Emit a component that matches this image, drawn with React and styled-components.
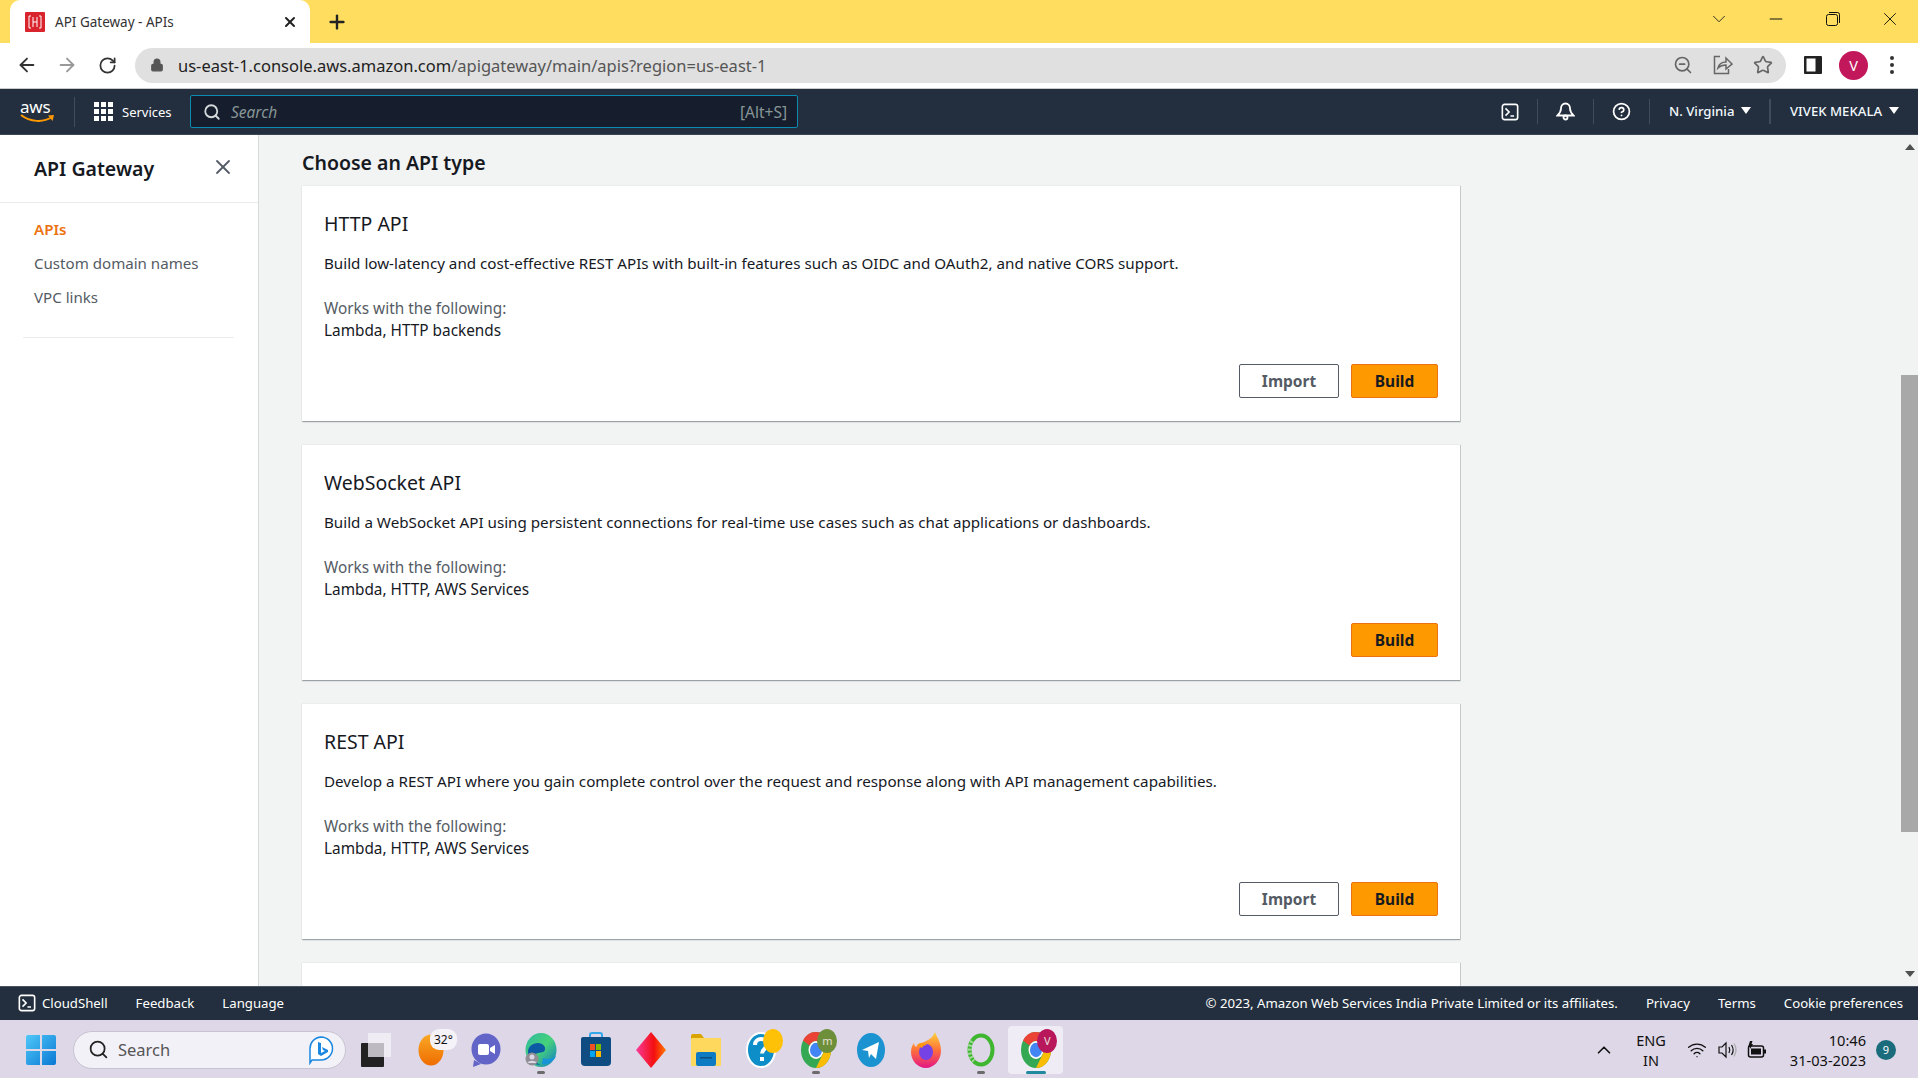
import React from "react";
import styled, { createGlobalStyle } from "styled-components";
import { ArrowLeft, ArrowRight, RotateCw, Lock, ZoomOut, Star, X, Plus, ChevronDown, ChevronUp, Minus, Search, CircleHelp, Wifi } from "lucide-react";

const GlobalStyle = createGlobalStyle`
  html, body { margin: 0; padding: 0; height: 100%; overflow: hidden; }
  body { font-family: "Noto Sans", "Liberation Sans", sans-serif; }
  #root { height: 1078px; width: 1918px; }
  * { box-sizing: border-box; }
`;

const apiTypes = [
  {
    title: "HTTP API",
    text: "Build low-latency and cost-effective REST APIs with built-in features such as OIDC and OAuth2, and native CORS support.",
    works: "Lambda, HTTP backends",
    canImport: true,
  },
  {
    title: "WebSocket API",
    text: "Build a WebSocket API using persistent connections for real-time use cases such as chat applications or dashboards.",
    works: "Lambda, HTTP, AWS Services",
    canImport: false,
  },
  {
    title: "REST API",
    text: "Develop a REST API where you gain complete control over the request and response along with API management capabilities.",
    works: "Lambda, HTTP, AWS Services",
    canImport: true,
  },
];

function ShellIcon({ size = 20 }) {
  return (
    <svg width={size} height={size} viewBox="0 0 20 20" fill="none" stroke="#fff" strokeWidth="1.8">
      <rect x="1.5" y="1.5" width="17" height="17" rx="2.5" />
      <path d="M5 6l4 4-4 4M10.5 14.5h4" />
    </svg>
  );
}

function BellIcon() {
  return (
    <svg width="19" height="19" viewBox="0 0 19 19" fill="none" stroke="#fff" strokeWidth="1.8">
      <path d="M9.500 1.500c-3 0-4.500 2.500-4.500 5 0 3-1 4.500-3.500 7h16c-2.500-2.500-3.500-4-3.500-7 0-2.500-1.500-5-4.500-5z" />
      <circle cx="9.500" cy="15.500" r="2" />
    </svg>
  );
}

function WindowsLogo() {
  return (
    <svg width="30" height="30" viewBox="0 0 30 30">
      <defs>
        <linearGradient id="win" x1="0" y1="0" x2="1" y2="1">
          <stop offset="0" stopColor="#4fc8f8" />
          <stop offset="1" stopColor="#0a78d4" />
        </linearGradient>
      </defs>
      <path fill="url(#win)" d="M0 2a2 2 0 012-2h12v14H0zM16 0h12a2 2 0 012 2v12H16zM0 16h14v14H2a2 2 0 01-2-2zM16 16h14v12a2 2 0 01-2 2H16z" />
    </svg>
  );
}

function DesktopIcon() {
  return (
    <svg width="30" height="36" viewBox="0 0 30 36">
      <rect x="7" y="1" width="23" height="24" fill="#efedf3" />
      <rect x="0" y="11" width="23" height="24" rx="1" fill="#222" />
      <rect x="7" y="11" width="16" height="14" fill="#bdbac2" />
    </svg>
  );
}

function WeatherIcon() {
  return (
    <svg width="26" height="32" viewBox="0 0 26 32">
      <defs>
        <linearGradient id="sun" x1="0" y1="0" x2="0" y2="1">
          <stop offset="0" stopColor="#f9a825" />
          <stop offset="1" stopColor="#ef6c00" />
        </linearGradient>
      </defs>
      <ellipse cx="13" cy="16" rx="12.5" ry="15.5" fill="url(#sun)" />
    </svg>
  );
}

function MeetIcon() {
  return (
    <svg width="30" height="34" viewBox="0 0 30 34">
      <ellipse cx="15" cy="16" rx="14.5" ry="15.5" fill="#6264c8" />
      <path d="M3 27l-1 7 8-3z" fill="#6264c8" />
      <rect x="7" y="11" width="11" height="11" rx="2" fill="#fff" />
      <path d="M19 15l5-3v9l-5-3z" fill="#fff" />
    </svg>
  );
}

function EdgeIcon() {
  return (
    <svg width="32" height="36" viewBox="0 0 32 36">
      <defs>
        <linearGradient id="edge" x1="0" y1="0" x2="1" y2="1">
          <stop offset="0" stopColor="#2fb7a0" />
          <stop offset="0.5" stopColor="#46d27a" />
          <stop offset="1" stopColor="#1077c9" />
        </linearGradient>
      </defs>
      <ellipse cx="16" cy="18" rx="15.5" ry="17" fill="url(#edge)" />
      <path d="M3 20c0-7 8-11 14-8 4 2 4 7 1 8-3 1-7 0-8 4-1 3 1 8 6 9C8 33 3 27 3 20z" fill="#0c59a4" />
      <path d="M17 32c6 1 12-3 14-8-4 3-9 4-13 2z" fill="#1793d8" />
      <circle cx="7" cy="27" r="6.5" fill="#8f8e94" />
      <circle cx="7" cy="25" r="2.5" fill="#dcd6e6" />
      <path d="M2.5 31c1-3 8-3 9 0z" fill="#dcd6e6" />
    </svg>
  );
}

function StoreIcon() {
  return (
    <svg width="30" height="36" viewBox="0 0 30 36">
      <path d="M9 6V3a2 2 0 012-2h8a2 2 0 012 2v3" fill="none" stroke="#35a7e8" strokeWidth="2" />
      <path d="M0 7a2 2 0 012-2h26a2 2 0 012 2v23a4 4 0 01-4 4H4a4 4 0 01-4-4z" fill="#0f4c81" />
      <rect x="9" y="12" width="5" height="6" fill="#f25022" />
      <rect x="15" y="12" width="5" height="6" fill="#7fba00" />
      <rect x="9" y="19" width="5" height="6" fill="#00a4ef" />
      <rect x="15" y="19" width="5" height="6" fill="#ffb900" />
    </svg>
  );
}

function DiamondIcon() {
  return (
    <svg width="30" height="36" viewBox="0 0 30 36">
      <defs>
        <linearGradient id="dia" x1="0" y1="0" x2="1" y2="0">
          <stop offset="0" stopColor="#f83a9a" />
          <stop offset="0.6" stopColor="#f40f0f" />
          <stop offset="1" stopColor="#ff7a00" />
        </linearGradient>
      </defs>
      <path d="M15 0l15 18-15 18L0 18z" fill="url(#dia)" />
    </svg>
  );
}

function FolderIcon() {
  return (
    <svg width="30" height="32" viewBox="0 0 30 32">
      <path d="M0 2a2 2 0 012-2h8l3 4h15a2 2 0 012 2v4H0z" fill="#d9a400" />
      <rect x="0" y="4" width="30" height="28" rx="1" fill="#fdd85d" />
      <rect x="5" y="18" width="20" height="14" rx="2" fill="#0d7bc4" />
      <rect x="9" y="23" width="12" height="1.5" fill="#0a4f80" />
    </svg>
  );
}

function HelpAppIcon() {
  return (
    <svg width="30" height="36" viewBox="0 0 30 36">
      <ellipse cx="15" cy="18" rx="14" ry="17" fill="#0d8ec9" stroke="#fff" strokeWidth="2" />
      <path d="M9 13c0-4 3-6 6-6s6 2 6 5.500c0 4-5 4.500-5 9M16 25v4" fill="none" stroke="#fff" strokeWidth="4" />
    </svg>
  );
}

function ChromeIcon() {
  return (
    <svg width="30" height="36" viewBox="0 0 30 30" preserveAspectRatio="none">
      <circle cx="15" cy="15" r="15" fill="#34a853" />
      <path d="M15 0a15 15 0 0113 7.5H15a7.5 7.5 0 00-6.5 3.75L2 7A15 15 0 0115 0z" fill="#ea4335" />
      <path d="M28 7.5A15 15 0 0115 30l6.5-11.25A7.5 7.5 0 0022 11z" fill="#fbbc04" />
      <circle cx="15" cy="15" r="7.5" fill="#fff" />
      <circle cx="15" cy="15" r="6" fill="#4285f4" />
    </svg>
  );
}

function TelegramIcon() {
  return (
    <svg width="28" height="34" viewBox="0 0 28 34">
      <ellipse cx="14" cy="17" rx="14" ry="17" fill="#1c93d1" />
      <path d="M5 17l17-8-3 17-5-5-2 4-1-7z" fill="#fff" />
    </svg>
  );
}

function FirefoxIcon() {
  return (
    <svg width="30" height="36" viewBox="0 0 30 36">
      <defs>
        <linearGradient id="fox" x1="0" y1="0" x2="0" y2="1">
          <stop offset="0" stopColor="#ffd43b" />
          <stop offset="0.5" stopColor="#ff7139" />
          <stop offset="1" stopColor="#e31587" />
        </linearGradient>
      </defs>
      <path d="M24 0c1 4 6 9 6 19 0 9-7 17-15 17S0 29 0 20c0-4 1-6 3-9 0 2 1 3 2 4 2-4 7-4 10-6 4-2 7-4 9-9z" fill="url(#fox)" />
      <ellipse cx="15" cy="20" rx="7" ry="8" fill="#7542e5" />
      <path d="M6 13c3-3 8-2 10 0-3 0-4 1-5 3z" fill="#ff980e" />
    </svg>
  );
}

function RingIcon() {
  return (
    <svg width="28" height="34" viewBox="0 0 28 34">
      <ellipse cx="14" cy="17" rx="11.5" ry="14.5" fill="none" stroke="#3fb62f" strokeWidth="4" />
      <path d="M5 8C1 14 2 24 7 28" fill="none" stroke="#a5d89c" strokeWidth="4" strokeDasharray="2 2" />
    </svg>
  );
}

function SidePanelIcon() {
  return (
    <svg width="18" height="18" viewBox="0 0 18 18">
      <rect width="18" height="18" rx="1" fill="#222" />
      <rect x="2.5" y="2.5" width="9" height="13" fill="#fff" />
    </svg>
  );
}

function ShareIcon() {
  return (
    <svg width="20" height="20" viewBox="0 0 20 20" fill="none" stroke="#666" strokeWidth="1.5">
      <path d="M7 1.5H1.5v17h14V14" />
      <path d="M5 13c1-4 4-6 8-6V3l6 6-6 5v-4c-3 0-6 1-8 3z" />
    </svg>
  );
}

function BatteryIcon() {
  return (
    <svg width="20" height="20" viewBox="0 0 20 20">
      <path d="M3 1L1 7h2v2l3-5H4.5L5.5 1z" fill="#111" />
      <rect x="1.5" y="6" width="15" height="11" rx="2" fill="none" stroke="#111" strokeWidth="1.5" />
      <rect x="4" y="8.5" width="10" height="6" fill="#111" />
      <rect x="17" y="9.5" width="2" height="4" fill="#111" />
    </svg>
  );
}

function SpeakerIcon() {
  return (
    <svg width="20" height="20" viewBox="0 0 20 20" fill="none" stroke="#111" strokeWidth="1.2">
      <path d="M2 7h3l4-4v14l-4-4H2z" />
      <path d="M12 7c1 2 1 4 0 6M14.5 5c2 3 2 7 0 10" />
      <path d="M17 3.5c2.500 4 2.500 9 0 13" stroke="#aaa" />
    </svg>
  );
}

function BingIcon() {
  return (
    <svg width="26" height="30" viewBox="0 0 26 30">
      <path d="M13 2a11.500 11.500 0 110 23H4l-2 3V13.500A11.500 11.500 0 0113 2z" fill="#fff" stroke="#1a87e0" strokeWidth="1.5" />
      <path d="M10 7l3 1v10l4-2-2-1-1-3 6 3v2l-7 4-3-2z" fill="#1a87e0" />
    </svg>
  );
}

function RestoreIcon() {
  return (
    <svg width="14" height="14" viewBox="0 0 14 14" fill="none" stroke="#111" strokeWidth="1">
      <rect x="0.500" y="2.500" width="11" height="11" rx="2" />
      <path d="M3 .5h8.500a2 2 0 012 2V11" />
    </svg>
  );
}

export default function App() {
  return (
    <Page>
      <GlobalStyle />
      <TabStrip>
        <Tab>
          <Favicon>
            <svg width="14" height="14" viewBox="0 0 14 14" fill="none" stroke="#fff" strokeWidth="1">
              <path d="M3 1H1v12h2M11 1h2v12h-2M5 2v10M9 2v10M5 7h4" />
            </svg>
          </Favicon>
          <TabTitle>API Gateway - APIs</TabTitle>
          <X size={16} strokeWidth={3} color="#222" />
        </Tab>
        <NewTab>
          <Plus size={22} strokeWidth={2.6} color="#222" />
        </NewTab>
        <WindowControls>
          <ChevronDown size={22} strokeWidth={1} color="#222" />
          <Minus size={20} strokeWidth={1.2} color="#111" />
          <RestoreIcon />
          <X size={22} strokeWidth={1} color="#111" />
        </WindowControls>
      </TabStrip>

      <Toolbar>
        <ToolIcon><ArrowLeft size={22} color="#333" /></ToolIcon>
        <ToolIcon><ArrowRight size={22} color="#999" /></ToolIcon>
        <ToolIcon><RotateCw size={19} color="#333" strokeWidth={2.2} /></ToolIcon>
        <Omnibox>
          <Lock size={14} color="#555" fill="#555" />
          <Url>us-east-1.console.aws.amazon.com<UrlRest>/apigateway/main/apis?region=us-east-1</UrlRest></Url>
          <OmniIcons>
            <ZoomOut size={20} color="#666" />
            <ShareIcon />
            <Star size={20} color="#666" />
          </OmniIcons>
        </Omnibox>
        <ProfileGroup>
          <SidePanelIcon />
          <Avatar>V</Avatar>
          <MenuDots><i /><i /><i /></MenuDots>
        </ProfileGroup>
      </Toolbar>

      <NavBar>
        <LogoSlot>
          <LogoWord>aws</LogoWord>
          <svg width="36" height="10" viewBox="0 0 36 10">
            <path d="M1 1c9 7 22 8 31 2" fill="none" stroke="#f90" strokeWidth="2" />
            <path d="M28 1.500l6-.5-1.500 6z" fill="#f90" />
          </svg>
        </LogoSlot>
        <ServicesButton>
          <GridIcon>{Array.from({ length: 9 }).map((_, i) => <i key={i} />)}</GridIcon>
          Services
        </ServicesButton>
        <SearchBox>
          <Search size={18} color="#d5dbdb" strokeWidth={2.4} />
          <SearchText>Search</SearchText>
          <SearchHint>[Alt+S]</SearchHint>
        </SearchBox>
        <NavRight>
          <NavIcon><ShellIcon size={18} /></NavIcon>
          <NavIcon><BellIcon /></NavIcon>
          <NavIcon><CircleHelp size={19} color="#fff" strokeWidth={2.2} /></NavIcon>
          <NavMenu $width={121}>N. Virginia<Caret /></NavMenu>
          <NavMenu $width={147} $last>VIVEK MEKALA<Caret /></NavMenu>
        </NavRight>
      </NavBar>

      <Body>
        <Sidebar>
          <SideHeader>
            <SideTitle>API Gateway</SideTitle>
            <CloseSlot><X size={24} strokeWidth={1.8} color="#545b64" /></CloseSlot>
          </SideHeader>
          <SideList>
            <SideLink $active>APIs</SideLink>
            <SideLink>Custom domain names</SideLink>
            <SideLink>VPC links</SideLink>
          </SideList>
          <SideRule />
        </Sidebar>
        <Main>
          <Heading>Choose an API type</Heading>
          {apiTypes.map((api) => (
            <Card key={api.title}>
              <CardTitle>{api.title}</CardTitle>
              <CardText>{api.text}</CardText>
              <WorksLabel>Works with the following:</WorksLabel>
              <WorksValue>{api.works}</WorksValue>
              <CardActions>
                {api.canImport && <Button>Import</Button>}
                <Button $primary>Build</Button>
              </CardActions>
            </Card>
          ))}
          <Card />
        </Main>
        <ScrollTrack>
          <ScrollArrow $up />
          <ScrollSpace><ScrollThumb /></ScrollSpace>
          <ScrollArrow />
        </ScrollTrack>
      </Body>

      <Footer>
        <FooterLeft>
          <FooterShell><ShellIcon size={18} />CloudShell</FooterShell>
          <span>Feedback</span>
          <span>Language</span>
        </FooterLeft>
        <FooterRight>
          <span>© 2023, Amazon Web Services India Private Limited or its affiliates.</span>
          <span>Privacy</span>
          <span>Terms</span>
          <span>Cookie preferences</span>
        </FooterRight>
      </Footer>

      <Taskbar>
        <StartSlot><WindowsLogo /></StartSlot>
        <TaskSearch>
          <Search size={21} color="#222" strokeWidth={2} />
          <TaskSearchText>Search</TaskSearchText>
          <BingIcon />
        </TaskSearch>
        <TaskIcons>
          <TaskSlot><DesktopIcon /></TaskSlot>
          <TaskSlot>
            <WeatherIcon />
            <TempBadge>32°</TempBadge>
          </TaskSlot>
          <TaskSlot><MeetIcon /></TaskSlot>
          <TaskSlot $running><EdgeIcon /></TaskSlot>
          <TaskSlot><StoreIcon /></TaskSlot>
          <TaskSlot><DiamondIcon /></TaskSlot>
          <TaskSlot><FolderIcon /></TaskSlot>
          <TaskSlot>
            <HelpAppIcon />
            <DotBadge $color="#ffc107" />
          </TaskSlot>
          <TaskSlot $running>
            <ChromeIcon />
            <DotBadge $color="#6d8f3a">m</DotBadge>
          </TaskSlot>
          <TaskSlot><TelegramIcon /></TaskSlot>
          <TaskSlot><FirefoxIcon /></TaskSlot>
          <TaskSlot $running><RingIcon /></TaskSlot>
          <TaskSlot $active>
            <ChromeIcon />
            <DotBadge $color="#b8175c">V</DotBadge>
          </TaskSlot>
        </TaskIcons>
        <Tray>
          <ChevronUp size={22} color="#111" strokeWidth={1.8} />
          <Lang><span>ENG</span><span>IN</span></Lang>
          <TrayIcons>
            <Wifi size={20} color="#111" strokeWidth={1.6} />
            <SpeakerIcon />
            <BatteryIcon />
          </TrayIcons>
          <Clock><span>10:46</span><span>31-03-2023</span></Clock>
          <NotifyBadge>9</NotifyBadge>
        </Tray>
      </Taskbar>
    </Page>
  );
}

const Page = styled.div`
  width: 1918px;
  height: 1078px;
  display: flex;
  flex-direction: column;
  overflow: hidden;
  background: #f2f3f3;
`;

const TabStrip = styled.div`
  height: 43px;
  flex: none;
  display: flex;
  align-items: flex-end;
  padding-left: 10px;
  background: #ffdd5e;
`;

const Tab = styled.div`
  width: 300px;
  height: 43px;
  display: flex;
  align-items: center;
  padding: 0 12px 0 15px;
  background: #fff;
  border-radius: 10px 10px 0 0;
`;

const Favicon = styled.div`
  width: 20px;
  height: 20px;
  display: flex;
  align-items: center;
  justify-content: center;
  background: #d9242d;
  border-radius: 1px;
`;

const TabTitle = styled.div`
  flex: 1;
  margin-left: 10px;
  font-size: 13.500px;
  color: #333;
`;

const NewTab = styled.div`
  width: 34px;
  height: 43px;
  margin-left: 10px;
  display: flex;
  align-items: center;
  justify-content: center;
`;

const WindowControls = styled.div`
  margin-left: auto;
  height: 43px;
  padding-bottom: 6px;
  display: grid;
  grid-template-columns: repeat(4, 57px);
  align-items: center;
  justify-items: center;
`;

const Toolbar = styled.div`
  height: 46px;
  flex: none;
  display: flex;
  align-items: center;
  padding: 0 0 1px 7px;
  background: #fff;
  border-bottom: 1px solid #c9cbcd;
`;

const ToolIcon = styled.div`
  width: 40px;
  display: flex;
  justify-content: center;
`;

const Omnibox = styled.div`
  width: 1651px;
  height: 35px;
  margin-left: 8px;
  display: flex;
  align-items: center;
  padding: 0 13px 0 15px;
  background: #e0e0e0;
  border-radius: 18px;
`;

const Url = styled.div`
  margin-left: 14px;
  font-size: 16.500px;
  color: #222;
`;

const UrlRest = styled.span`
  color: #555;
`;

const OmniIcons = styled.div`
  margin-left: auto;
  width: 100px;
  display: flex;
  align-items: center;
  justify-content: space-between;
`;

const ProfileGroup = styled.div`
  flex: 1;
  display: flex;
  align-items: center;
  padding-left: 18px;
  gap: 17px;
`;

const Avatar = styled.div`
  width: 29px;
  height: 29px;
  display: flex;
  align-items: center;
  justify-content: center;
  border-radius: 50%;
  background: #c2185b;
  color: #fff;
  font-size: 14.500px;
`;

const MenuDots = styled.div`
  margin-left: 5px;
  display: flex;
  flex-direction: column;
  gap: 3px;

  i {
    width: 4px;
    height: 4px;
    border-radius: 50%;
    background: #333;
  }
`;

const NavBar = styled.div`
  height: 46px;
  flex: none;
  display: flex;
  align-items: center;
  background: #232f3e;
  color: #fff;
  border-bottom: 1px solid #3b4554;
`;

const LogoSlot = styled.div`
  width: 75px;
  height: 30px;
  padding-left: 20px;
  display: flex;
  flex-direction: column;
  justify-content: center;
  border-right: 1px solid #414b5a;
`;

const LogoWord = styled.span`
  height: 15px;
  font-size: 17px;
  line-height: 15px;
  letter-spacing: -0.2px;
  color: #fff;
`;

const ServicesButton = styled.div`
  width: 115px;
  display: flex;
  align-items: center;
  gap: 9px;
  padding-left: 19px;
  font-size: 13px;
`;

const GridIcon = styled.div`
  display: grid;
  grid-template-columns: repeat(3, 5px);
  gap: 2px;

  i {
    width: 5px;
    height: 5px;
    background: #fff;
  }
`;

const SearchBox = styled.div`
  width: 608px;
  height: 33px;
  display: flex;
  align-items: center;
  padding: 0 10px 0 12px;
  background: #161e2d;
  border: 1px solid #0d8ab0;
  border-radius: 2px;
`;

const SearchText = styled.span`
  margin-left: 10px;
  font-size: 15.500px;
  font-style: italic;
  color: #879596;
`;

const SearchHint = styled.span`
  margin-left: auto;
  font-size: 15.500px;
  color: #879596;
`;

const NavRight = styled.div`
  margin-left: auto;
  display: flex;
  align-items: center;
`;

const NavIcon = styled.div`
  width: 56px;
  height: 25px;
  display: flex;
  align-items: center;
  justify-content: center;
  border-right: 1px solid #414b5a;
`;

const NavMenu = styled.div`
  width: ${(p) => p.$width}px;
  height: 25px;
  padding: 0 0 2px 19px;
  display: flex;
  align-items: center;
  gap: 7px;
  font-size: 13.200px;
  font-weight: 500;
  color: #f2f8fd;
  border-right: ${(p) => (p.$last ? "none" : "2px solid #414b5a")};
`;

const Caret = styled.span`
  width: 0;
  height: 0;
  border-left: 5px solid transparent;
  border-right: 5px solid transparent;
  border-top: 7px solid #fff;
`;

const Body = styled.div`
  flex: 1;
  min-height: 0;
  display: flex;
`;

const Sidebar = styled.aside`
  width: 259px;
  flex: none;
  background: #fff;
  border-right: 1px solid #d5dbdb;
`;

const SideHeader = styled.div`
  height: 68px;
  display: flex;
  align-items: center;
  justify-content: space-between;
  padding: 0 23px 0 34px;
  border-bottom: 1px solid #eaeded;
`;

const CloseSlot = styled.div`
  height: 24px;
  margin-top: -3px;
`;

const SideTitle = styled.div`
  font-size: 19.500px;
  font-weight: 600;
  color: #16191f;
`;

const SideList = styled.div`
  padding: 9px 0 0 34px;
`;

const SideLink = styled.div`
  height: 34px;
  display: flex;
  align-items: center;
  font-size: 15.100px;
  font-weight: ${(p) => (p.$active ? 600 : 400)};
  color: ${(p) => (p.$active ? "#ec7211" : "#545b64")};
`;

const SideRule = styled.div`
  height: 1px;
  margin: 23px 24px 0 23px;
  background: #eaeded;
`;

const Main = styled.main`
  width: 1202px;
  flex: none;
  overflow: hidden;
  padding: 0 0 0 43px;
`;

const Heading = styled.h2`
  margin: 0;
  height: 50px;
  padding-top: 12px;
  font-size: 19.500px;
  line-height: 32px;
  font-weight: 600;
  color: #16191f;
`;

const Card = styled.section`
  width: 1158px;
  height: 236px;
  flex: none;
  margin-bottom: 23px;
  padding: 20px 22px 0;
  display: flex;
  flex-direction: column;
  background: #fff;
  border-top: 1px solid #eaeded;
  box-shadow: 0 1px 1px 0 rgba(0, 28, 36, 0.25), 1px 1px 1px 0 rgba(0, 28, 36, 0.15);
`;

const CardTitle = styled.h3`
  margin: 0;
  font-size: 19.500px;
  line-height: 36px;
  font-weight: 400;
  color: #16191f;
`;

const CardText = styled.p`
  margin: 4px 0 0;
  font-size: 15.200px;
  line-height: 34px;
  color: #16191f;
`;

const WorksLabel = styled.div`
  margin-top: 17px;
  font-size: 15.350px;
  line-height: 22px;
  color: #545b64;
`;

const WorksValue = styled.div`
  font-size: 15.350px;
  line-height: 22px;
  color: #16191f;
`;

const CardActions = styled.div`
  margin-top: 23px;
  display: flex;
  justify-content: flex-end;
  gap: 12px;
`;

const Button = styled.button`
  width: ${(p) => (p.$primary ? "87px" : "100px")};
  height: 34px;
  padding: 0;
  font-family: inherit;
  font-size: 15.500px;
  font-weight: 700;
  border-radius: 2px;
  color: ${(p) => (p.$primary ? "#16191f" : "#545b64")};
  background: ${(p) => (p.$primary ? "#ff9900" : "#fff")};
  border: 1px solid ${(p) => (p.$primary ? "#ec7211" : "#545b64")};
`;

const ScrollTrack = styled.div`
  margin-left: auto;
  width: 17px;
  flex: none;
  display: flex;
  flex-direction: column;
  background: #f1f3f3;
`;

const ScrollArrow = styled.div`
  height: 24px;
  flex: none;
  display: flex;
  align-items: center;
  justify-content: center;

  &::after {
    content: "";
    border-left: 5px solid transparent;
    border-right: 5px solid transparent;
    ${(p) => (p.$up ? "border-bottom: 6px solid #505050;" : "border-top: 6px solid #505050;")}
  }
`;

const ScrollSpace = styled.div`
  flex: 1;
  padding-top: 216px;
`;

const ScrollThumb = styled.div`
  height: 457px;
  background: #a8a8a8;
`;

const Footer = styled.footer`
  height: 34px;
  flex: none;
  display: flex;
  align-items: center;
  justify-content: space-between;
  padding: 0 15px 1px 18px;
  background: #232f3e;
  border-top: 1px solid #4a5360;
  color: #fff;
  font-size: 13.200px;
`;

const FooterLeft = styled.div`
  display: flex;
  align-items: center;
  gap: 28px;
`;

const FooterShell = styled.div`
  display: flex;
  align-items: center;
  gap: 6px;
`;

const FooterRight = styled.div`
  display: flex;
  align-items: center;
  gap: 28px;
`;

const Taskbar = styled.div`
  height: 58px;
  flex: none;
  display: flex;
  align-items: center;
  padding-top: 1px;
  background: #ddd7e7;
`;

const StartSlot = styled.div`
  width: 73px;
  display: flex;
  justify-content: center;
  padding-left: 8px;
`;

const TaskSearch = styled.div`
  width: 273px;
  height: 38px;
  display: flex;
  align-items: center;
  padding: 0 11px 0 14px;
  background: #f3f1f8;
  border: 1px solid #c8c3d0;
  border-radius: 19px;
`;

const TaskSearchText = styled.span`
  flex: 1;
  margin-left: 9px;
  font-size: 16.500px;
  color: #555;
`;

const TaskIcons = styled.div`
  margin-left: 3px;
  display: flex;
  align-items: center;
`;

const TaskSlot = styled.div`
  position: relative;
  width: 54.950px;
  height: 48px;
  display: flex;
  align-items: center;
  justify-content: center;
  border-radius: 4px;
  background: ${(p) => (p.$active ? "#efecf5" : "transparent")};

  &::after {
    content: "";
    display: ${(p) => (p.$running || p.$active ? "block" : "none")};
    position: absolute;
    bottom: 0;
    left: 50%;
    transform: translateX(-50%);
    width: ${(p) => (p.$active ? "20px" : "8px")};
    height: 3px;
    border-radius: 2px;
    background: ${(p) => (p.$active ? "#1f8a9e" : "#6b6b6b")};
  }
`;

const TempBadge = styled.span`
  position: absolute;
  top: 3px;
  right: 2px;
  padding: 2px 4px;
  border-radius: 9px;
  background: #f5f2f8;
  font-size: 12px;
  color: #111;
`;

const DotBadge = styled.span`
  position: absolute;
  top: 3px;
  right: 6px;
  width: 20px;
  height: 24px;
  display: flex;
  align-items: center;
  justify-content: center;
  border-radius: 50%;
  background: ${(p) => p.$color};
  font-size: 11px;
  color: #e8e0d8;
`;

const Tray = styled.div`
  margin-left: auto;
  display: flex;
  align-items: center;
  padding-right: 22px;
  color: #111;
`;

const Lang = styled.div`
  width: 36px;
  margin-left: 18px;
  display: flex;
  flex-direction: column;
  align-items: center;
  font-size: 14.500px;
  line-height: 20px;
`;

const TrayIcons = styled.div`
  margin-left: 18px;
  display: flex;
  align-items: center;
  gap: 10px;
`;

const Clock = styled.div`
  width: 99px;
  display: flex;
  flex-direction: column;
  align-items: flex-end;
  font-size: 14.600px;
  line-height: 20px;
`;

const NotifyBadge = styled.div`
  width: 20px;
  height: 20px;
  margin-left: 10px;
  display: flex;
  align-items: center;
  justify-content: center;
  border-radius: 50%;
  background: #1a6b7c;
  color: #fff;
  font-size: 11px;
`;
